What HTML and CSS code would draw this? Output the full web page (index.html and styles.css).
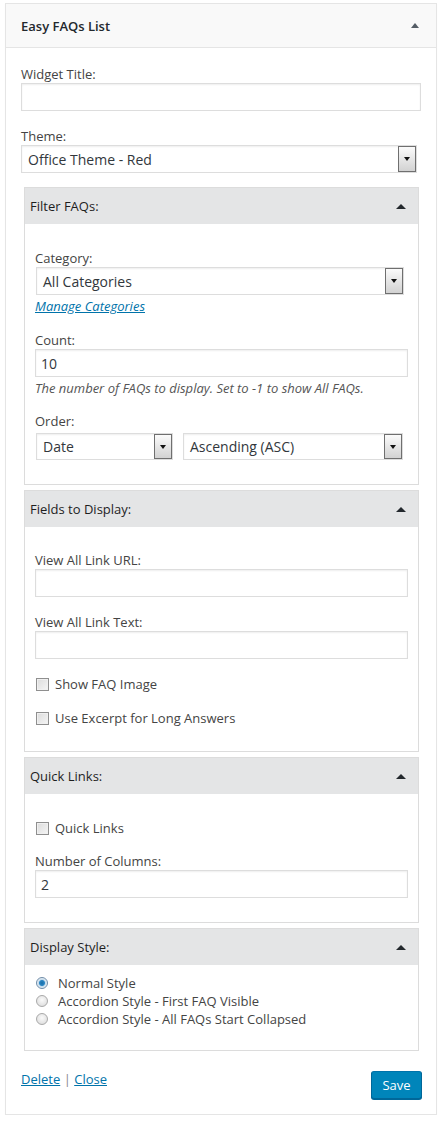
FILE: index.html
```html
<!DOCTYPE html>
<html>
<head>
<meta charset="utf-8">
<link rel="stylesheet" href="styles.css">
</head>
<body>
<div class="widget">
  <div class="widget-top">
    <span class="widget-title">Easy FAQs List</span>
    <span class="top-arrow"></span>
  </div>
  <div class="widget-inside">
    <label class="lbl">Widget Title:</label>
    <input class="txt wide" type="text" value="">

    <label class="lbl gap16">Theme:</label>
    <div class="sel theme-sel"><span class="sel-val">Office Theme - Red</span><span class="sel-btn"><i></i></span></div>

    <div class="section first">
      <div class="section-head"><span>Filter FAQs:</span><span class="sec-arrow"></span></div>
      <div class="section-body pad-filter">
        <label class="lbl">Category:</label>
        <div class="sel cat-sel"><span class="sel-val">All Categories</span><span class="sel-btn"><i></i></span></div>
        <a class="manage" href="#">Manage Categories</a>
        <label class="lbl gap16">Count:</label>
        <input class="txt full" type="text" value="10">
        <p class="desc">The number of FAQs to display. Set to -1 to show All FAQs.</p>
        <label class="lbl gap15">Order:</label>
        <div class="order-row">
          <div class="sel small date-sel"><span class="sel-val">Date</span><span class="sel-btn"><i></i></span></div>
          <div class="sel small dir-sel"><span class="sel-val">Ascending (ASC)</span><span class="sel-btn"><i></i></span></div>
        </div>
      </div>
    </div>

    <div class="section">
      <div class="section-head"><span>Fields to Display:</span><span class="sec-arrow"></span></div>
      <div class="section-body pad-fields">
        <label class="lbl">View All Link URL:</label>
        <input class="txt full" type="text" value="">
        <label class="lbl gap16">View All Link Text:</label>
        <input class="txt full" type="text" value="">
        <div class="check gap16"><span class="box"></span><span>Show FAQ Image</span></div>
        <div class="check gap16"><span class="box"></span><span>Use Excerpt for Long Answers</span></div>
      </div>
    </div>

    <div class="section">
      <div class="section-head"><span>Quick Links:</span><span class="sec-arrow"></span></div>
      <div class="section-body pad-quick">
        <div class="check"><span class="box"></span><span>Quick Links</span></div>
        <label class="lbl gap15">Number of Columns:</label>
        <input class="txt full" type="text" value="2">
      </div>
    </div>

    <div class="section">
      <div class="section-head"><span>Display Style:</span><span class="sec-arrow"></span></div>
      <div class="section-body pad-style">
        <div class="radio"><span class="dot checked"></span><span>Normal Style</span></div>
        <div class="radio"><span class="dot"></span><span>Accordion Style - First FAQ Visible</span></div>
        <div class="radio"><span class="dot"></span><span>Accordion Style - All FAQs Start Collapsed</span></div>
      </div>
    </div>

    <div class="footer">
      <div class="links"><a href="#">Delete</a> <span class="sep">|</span> <a href="#">Close</a></div>
      <button class="save">Save</button>
    </div>
  </div>
</div>
</body>
</html>
```
FILE: styles.css
```css
body {
  margin: 0;
  background: #fff;
  font-family: "Open Sans", "DejaVu Sans", sans-serif;
  font-size: 13px;
  color: #444;
}
.widget {
  margin: 3px 0 0 5px;
  width: 432px;
  box-sizing: border-box;
  border: 1px solid #e5e5e5;
  box-shadow: 0 1px 1px rgba(0,0,0,.04);
  background: #fff;
}
.widget-top {
  height: 43px;
  background: #f9f9f9;
  border-bottom: 1px solid #e5e5e5;
  display: flex;
  align-items: center;
  justify-content: space-between;
  padding: 0 17px 0 15px;
}
.widget-title {
  font-weight: 600;
  font-size: 13px;
  color: #23282d;
}
.top-arrow {
  width: 0; height: 0;
  border-left: 4px solid transparent;
  border-right: 4px solid transparent;
  border-bottom: 5px solid #555d66;
}
.widget-inside {
  padding: 17px 14px 15px 15px;
}
.lbl {
  display: block;
  line-height: 18px;
  height: 18px;
}
.gap16 { margin-top: 16px; }
.gap15 { margin-top: 15px; }
.txt {
  display: block;
  box-sizing: border-box;
  height: 28px;
  border: 1px solid #ddd;
  box-shadow: inset 0 1px 2px rgba(0,0,0,.07);
  font-family: "Open Sans", "DejaVu Sans", sans-serif;
  font-size: 14px;
  color: #32373c;
  padding: 0 5px;
  margin: 0;
  outline: none;
}
.wide { width: 400px; }
.full { width: 100%; }
.sel {
  box-sizing: border-box;
  display: flex;
  align-items: center;
  justify-content: space-between;
  border: 1px solid #ddd;
  box-shadow: inset 0 1px 2px rgba(0,0,0,.07);
  background: #fff;
  font-size: 14px;
  color: #32373c;
  padding-left: 6px;
}
.theme-sel { width: 396px; height: 28px; }
.cat-sel { width: 368px; height: 28px; margin-left: 1px; }
.small { height: 27px; }
.date-sel { width: 137px; }
.dir-sel { width: 220px; }
.sel-btn {
  box-sizing: border-box;
  width: 18px;
  height: 100%;
  border: 1px solid #6f6f6f;
  background: linear-gradient(#fbfbfb, #e6e6e6 50%, #d2d2d2);
  display: flex;
  align-items: center;
  justify-content: center;
}
.sel-btn i {
  width: 0; height: 0;
  border-left: 3px solid transparent;
  border-right: 3px solid transparent;
  border-top: 4px solid #111;
}
.section {
  margin: 5px 3px 0;
  border: 1px solid #dcdcdc;
  background: #fff;
}
.section.first { margin-top: 14px; }
.section-head {
  height: 36px;
  background: #e4e5e6;
  display: flex;
  align-items: center;
  justify-content: space-between;
  padding: 0 12px 0 5px;
  color: #1e1e1e;
}
.sec-arrow {
  width: 0; height: 0;
  border-left: 5px solid transparent;
  border-right: 5px solid transparent;
  border-bottom: 5px solid #23282d;
}
.section-body { padding: 0 10px; }
.pad-filter { padding-top: 25px; padding-bottom: 24px; }
.pad-fields { padding-top: 24px; padding-bottom: 24px; }
.pad-quick { padding-top: 25px; padding-bottom: 24px; }
.pad-style { padding-top: 9px; padding-bottom: 22px; }
.manage {
  display: block;
  margin-top: 2px;
  line-height: 18px;
  font-style: italic;
  color: #0073aa;
  text-decoration: underline;
}
.desc {
  margin: 2px 0 0;
  line-height: 18px;
  font-style: italic;
  color: #555;
}
.order-row {
  display: flex;
  gap: 10px;
  margin-top: 3px;
  padding-left: 1px;
}
.check {
  display: flex;
  align-items: center;
  height: 18px;
  line-height: 18px;
  padding-left: 1px;
}
.box {
  box-sizing: border-box;
  width: 13px;
  height: 13px;
  border: 1px solid #8f8f8f;
  background: linear-gradient(135deg, #dcdcdc, #f5f5f5);
  margin-right: 6px;
  box-shadow: inset 0 0 0 1px #f0f0f0;
}
.radio {
  display: flex;
  align-items: center;
  height: 18px;
  line-height: 18px;
  padding-left: 1px;
}
.dot {
  box-sizing: border-box;
  width: 12px;
  height: 12px;
  border-radius: 50%;
  border: 1px solid #a9a9a9;
  background: radial-gradient(circle at 50% 40%, #fafafa, #d8d8d8);
  margin-right: 10px;
  position: relative;
}
.dot.checked {
  border-color: #6f8ca8;
  background: radial-gradient(circle, #1a6ea8 0, #2a86c4 2.5px, #c4dbec 3.5px, #e8f0f6 5px);
}
.footer {
  margin-top: 19px;
  display: flex;
  justify-content: space-between;
  align-items: flex-start;
}
.links {
  line-height: 18px;
  color: #888;
}
.links a {
  color: #0073aa;
  text-decoration: underline;
}
.save {
  box-sizing: border-box;
  height: 28px;
  width: 51px;
  margin-top: 1px;
  background: #0085ba;
  border: 1px solid #0073aa;
  border-color: #0073aa #006799 #006799;
  box-shadow: 0 1px 0 #006799;
  border-radius: 3px;
  color: #fff;
  font-family: "Open Sans", "DejaVu Sans", sans-serif;
  font-size: 13px;
  padding: 0;
}
```
